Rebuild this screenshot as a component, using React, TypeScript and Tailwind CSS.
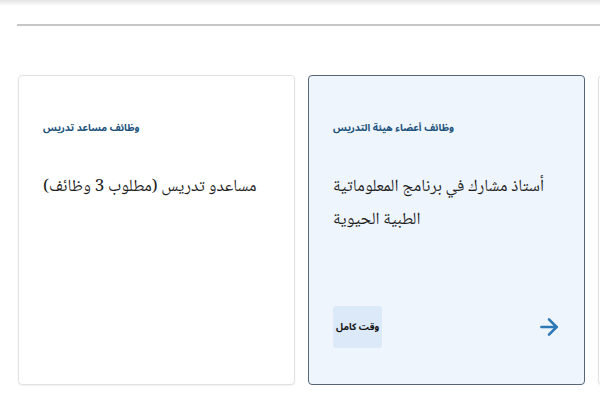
import React from 'react';
import { ArrowRight } from 'lucide-react';

type Job = {
  category?: string;
  title?: string;
  type?: string;
  active?: boolean;
};

const jobs: Job[] = [
  { category: 'وظائف مساعد تدريس', title: 'مساعدو تدريس (مطلوب 3 وظائف)' },
  {
    category: 'وظائف أعضاء هيئة التدريس',
    title: 'أستاذ مشارك في برنامج المعلوماتية الطبية الحيوية',
    type: 'وقت كامل',
    active: true,
  },
  {},
];

const JobCard: React.FC<{ job: Job }> = ({ job }) => (
  <div
    className={`flex h-[310px] w-[277px] shrink-0 flex-col rounded-[4px] border px-6 pt-[42px] pb-[36px] ${
      job.active
        ? 'border-[#556677] bg-[#eef5fd]'
        : 'border-[#e2e2e2] bg-white shadow-[0_1px_2px_rgba(0,0,0,0.06)]'
    }`}
  >
    {job.category && (
      <p
        dir="rtl"
        className="text-left font-['Noto_Sans_Arabic',sans-serif] text-[10px] font-bold leading-5 text-[#1d527c]"
      >
        {job.category}
      </p>
    )}
    {job.title && (
      <h3 dir="rtl" className="mt-[33px] text-left text-[17px] leading-[33px] text-[#1e1e1e]">
        {job.title}
      </h3>
    )}
    <div className="mt-auto flex items-center justify-between">
      {job.type ? (
        <span className="flex h-[42px] items-center rounded-[3px] bg-[#dce9f8] px-[3px] font-['Noto_Sans_Arabic',sans-serif] text-[9.5px] font-bold text-[#111]">
          {job.type}
        </span>
      ) : (
        <span />
      )}
      {job.active && <ArrowRight className="mr-[-2px] h-[26px] w-[26px] text-[#2d78b6]" strokeWidth={2.4} />}
    </div>
  </div>
);

const App: React.FC = () => {
  return (
    <main
      className="relative h-[400px] w-[600px] overflow-hidden bg-white"
      style={{ fontFamily: '"Noto Naskh Arabic", "DejaVu Sans", sans-serif' }}
    >
      {/* top fade */}
      <div className="h-[6px] bg-gradient-to-b from-[#e4e4e4] to-white" />

      {/* divider */}
      <div className="mt-[18px] ml-[17px] h-[2px] bg-[#c6c6c6]" />

      {/* cards */}
      <div className="mt-[49px] flex gap-[13px] pl-[18px]">
        {jobs.map((job, i) => (
          <JobCard key={i} job={job} />
        ))}
      </div>
    </main>
  );
};

export default App;
